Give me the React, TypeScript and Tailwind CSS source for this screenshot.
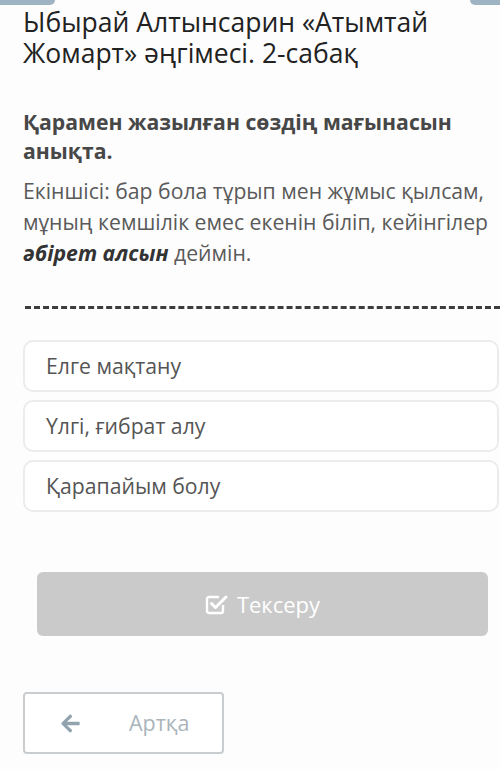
import { FaArrowLeft } from "react-icons/fa";

const options = ["Елге мақтану", "Үлгі, ғибрат алу", "Қарапайым болу"];

export default function App() {
  return (
    <div
      className="min-h-screen w-[500px] overflow-hidden bg-[#fdfdfd]"
      style={{ fontFamily: '"Open Sans", "Noto Sans", sans-serif' }}
    >
      <div className="flex h-[5px] justify-between">
        <div className="w-[55px] rounded-br-[6px] bg-[#9fb4c2]" />
        <div className="w-[30px] rounded-bl-[6px] bg-[#9fb4c2]" />
      </div>

      <h1 className="mt-[2px] pl-[23px] pr-[10px] text-[26.5px] leading-[31px] text-[#222]">
        Ыбырай Алтынсарин «Атымтай Жомарт» әңгімесі. 2-сабақ
      </h1>

      <div className="mt-[38px] pl-[23px] pr-[6px]">
        <p className="text-[21.2px] font-bold leading-[29px] text-[#474747]">
          Қарамен жазылған сөздің мағынасын анықта.
        </p>
        <p className="mt-[10px] text-[21.2px] leading-[31px] text-[#5a5a5a]">
          Екіншісі: бар бола тұрып мен жұмыс қылсам, мұның кемшілік емес екенін біліп, кейінгілер{" "}
          <b className="italic text-[#333]">әбірет алсын</b> деймін.
        </p>
      </div>

      <div className="ml-[25px] mt-[38px] border-t-[3px] border-dashed border-[#3d3d3d]" />

      <div className="ml-[23px] mr-px mt-[31px] flex flex-col gap-[8px]">
        {options.map((option) => (
          <div
            key={option}
            className="flex h-[52px] items-center rounded-[10px] border-2 border-[#ececec] bg-white pl-[21px] text-[21.2px] text-[#555]"
          >
            {option}
          </div>
        ))}
      </div>

      <div className="ml-[37px] mr-[12px] mt-[60px] flex h-[64px] items-center justify-center gap-[8px] rounded-[6px] bg-[#cacaca] text-[22px] text-white">
        <CheckSquareIcon />
        <span>Тексеру</span>
      </div>

      <div className="ml-[23px] mt-[56px] flex h-[62px] w-[201px] items-center rounded-[4px] border-2 border-[#c9cdd0] bg-white pl-[35px] text-[21.5px] text-[#aab4bb]">
        <FaArrowLeft className="size-[21px] text-[#91a3ae]" />
        <span className="ml-[48px]">Артқа</span>
      </div>
    </div>
  );
}

function CheckSquareIcon() {
  return (
    <svg aria-hidden="true" className="size-[24px]" viewBox="0 0 24 24" fill="none">
      <path
        d="M18 13V19a2 2 0 0 1-2 2H4a2 2 0 0 1-2-2V7a2 2 0 0 1 2-2h10"
        stroke="currentColor"
        strokeWidth="2.4"
        strokeLinejoin="round"
      />
      <path
        d="M6.5 11.5l4 4L21 5"
        stroke="currentColor"
        strokeWidth="3"
        strokeLinecap="round"
        strokeLinejoin="round"
      />
    </svg>
  );
}
